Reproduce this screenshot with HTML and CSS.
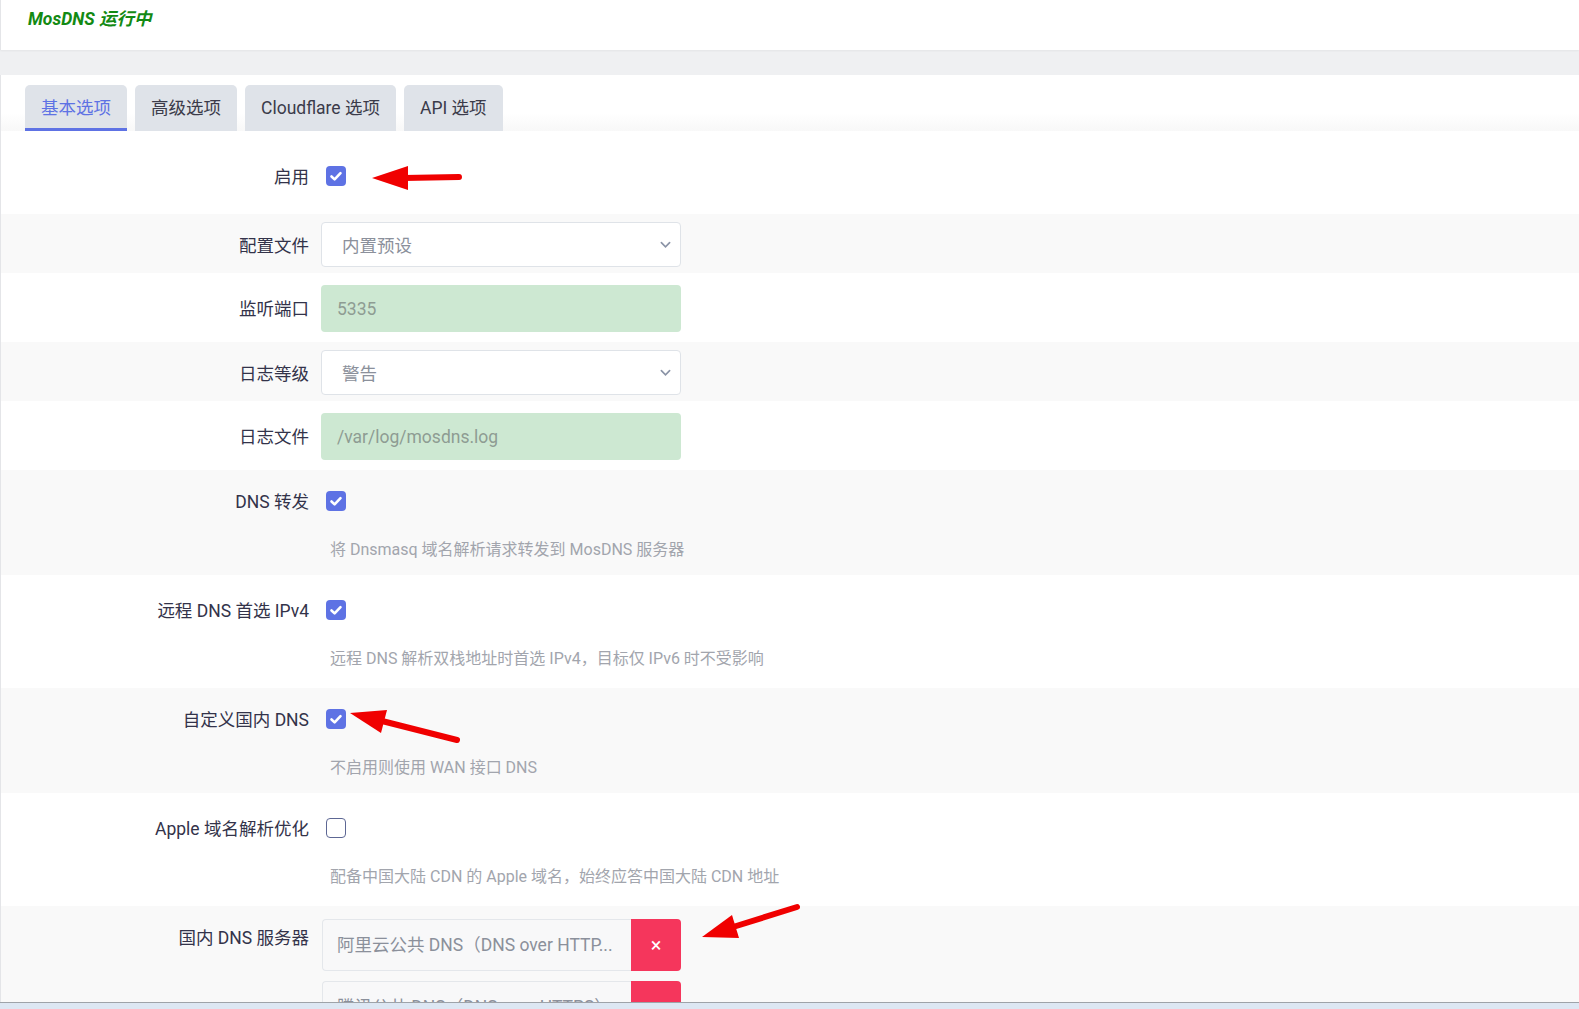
FILE: index.html
```html
<!DOCTYPE html>
<html lang="zh-CN">
<head>
    <meta charset="UTF-8">
    <meta name="viewport" content="width=device-width, initial-scale=1.0">
    <title>MosDNS</title>
    <link rel="stylesheet" href="styles.css">
</head>
<body>
    <div class="status-card">
        <span class="status-text">MosDNS 运行中</span>
    </div>

    <div class="main-card">
        <div class="tabs">
            <button class="tab-button active">基本选项</button>
            <button class="tab-button">高级选项</button>
            <button class="tab-button">Cloudflare 选项</button>
            <button class="tab-button">API 选项</button>
        </div>

        <div class="section">
            <div class="row first">
                <div class="row-label">启用</div>
                <div class="row-field">
                    <div class="check-line"><span class="checkbox checked"><svg viewBox="0 0 20 20"><polyline points="5.5,10.5 8.6,13.4 14.5,7.2"/></svg></span></div>
                </div>
            </div>

            <div class="row">
                <div class="row-label">配置文件</div>
                <div class="row-field">
                    <div class="select">内置预设<svg class="chevron" viewBox="0 0 12 8"><polyline points="1.5,1.5 6,6 10.5,1.5"/></svg></div>
                </div>
            </div>

            <div class="row">
                <div class="row-label">监听端口</div>
                <div class="row-field">
                    <div class="text-input">5335</div>
                </div>
            </div>

            <div class="row">
                <div class="row-label">日志等级</div>
                <div class="row-field">
                    <div class="select">警告<svg class="chevron" viewBox="0 0 12 8"><polyline points="1.5,1.5 6,6 10.5,1.5"/></svg></div>
                </div>
            </div>

            <div class="row">
                <div class="row-label">日志文件</div>
                <div class="row-field">
                    <div class="text-input">/var/log/mosdns.log</div>
                </div>
            </div>

            <div class="row">
                <div class="row-label">DNS 转发</div>
                <div class="row-field">
                    <div class="check-line"><span class="checkbox checked"><svg viewBox="0 0 20 20"><polyline points="5.5,10.5 8.6,13.4 14.5,7.2"/></svg></span></div>
                    <div class="description">将 Dnsmasq 域名解析请求转发到 MosDNS 服务器</div>
                </div>
            </div>

            <div class="row">
                <div class="row-label">远程 DNS 首选 IPv4</div>
                <div class="row-field">
                    <div class="check-line"><span class="checkbox checked"><svg viewBox="0 0 20 20"><polyline points="5.5,10.5 8.6,13.4 14.5,7.2"/></svg></span></div>
                    <div class="description">远程 DNS 解析双栈地址时首选 IPv4，目标仅 IPv6 时不受影响</div>
                </div>
            </div>

            <div class="row">
                <div class="row-label">自定义国内 DNS</div>
                <div class="row-field">
                    <div class="check-line"><span class="checkbox checked"><svg viewBox="0 0 20 20"><polyline points="5.5,10.5 8.6,13.4 14.5,7.2"/></svg></span></div>
                    <div class="description">不启用则使用 WAN 接口 DNS</div>
                </div>
            </div>

            <div class="row">
                <div class="row-label">Apple 域名解析优化</div>
                <div class="row-field">
                    <div class="check-line"><span class="checkbox"></span></div>
                    <div class="description">配备中国大陆 CDN 的 Apple 域名，始终应答中国大陆 CDN 地址</div>
                </div>
            </div>

            <div class="row">
                <div class="row-label">国内 DNS 服务器</div>
                <div class="row-field">
                    <div class="dyn-list">
                        <div class="dyn-item">
                            <div class="dyn-value">阿里云公共 DNS（DNS over HTTP...</div>
                            <button class="dyn-remove">×</button>
                        </div>
                        <div class="dyn-item">
                            <div class="dyn-value">腾讯公共 DNS（DNS over HTTPS）</div>
                            <button class="dyn-remove">×</button>
                        </div>
                    </div>
                </div>
            </div>
        </div>
    </div>

    <!-- red arrows drawn over the screenshot -->
    <svg class="annotations" viewBox="0 0 1579 1009">
        <line x1="404" y1="178" x2="459" y2="177"/>
        <polygon points="372,178 408,166 408,190"/>
        <line x1="382" y1="721" x2="457" y2="740"/>
        <polygon points="350,713 381,733 387,710"/>
        <line x1="733" y1="927" x2="797" y2="907"/>
        <polygon points="702,937 739,938 732,915"/>
    </svg>

    <div class="bottom-strip"></div>
</body>
</html>
```

FILE: styles.css
```css
html, body {
    overflow: hidden;
}
body {
    margin: 0;
    background: #eff0f2;
    font-family: Roboto, "Noto Sans CJK SC", sans-serif;
    font-size: 17.5px;
    color: #33334a;
}
.status-card {
    height: 50px;
    box-sizing: border-box;
    padding: 8px 27px;
    background: #ffffff;
    border-left: 1px solid #e4e5e8;
    box-shadow: 0 1px 2px rgba(0, 0, 0, 0.05);
}
.status-text {
    line-height: 22px;
    font-weight: bold;
    font-style: italic;
    color: #138a13;
}
.main-card {
    margin-top: 25px;
    background: #ffffff;
    border-left: 1px solid #e4e5e8;
}
.tabs {
    display: flex;
    gap: 8px;
    padding: 10px 0 0 24px;
    background: linear-gradient(to bottom, #ffffff 0, #ffffff 38px, #f8f8f8 56px);
}
.tab-button {
    height: 46px;
    padding: 0 16px 3px;
    border: none;
    border-radius: 5px 5px 0 0;
    background: #dfe3e9;
    font-family: inherit;
    font-size: 17.5px;
    color: #3b3b4a;
}
.tab-button.active {
    color: #5e72e4;
    box-shadow: inset 0 -3px 0 #5e72e4;
}
.section {
    padding-top: 10px;
}
.row {
    display: grid;
    grid-template-columns: 308px 1fr;
    column-gap: 12px;
    align-items: start;
    padding: 12px 0 10px;
    background: #ffffff;
}
.row:nth-child(even) {
    padding: 8px 0 6px;
    background: #f9f9f9;
}
.row.first {
    padding-bottom: 16px;
}
.row-label {
    height: 45px;
    display: flex;
    align-items: center;
    justify-content: flex-end;
    white-space: nowrap;
}
.check-line {
    height: 45px;
    display: flex;
    align-items: center;
}
.checkbox {
    width: 20px;
    height: 20px;
    margin-left: 5px;
    box-sizing: border-box;
    border: 1.5px solid #5d6794;
    border-radius: 4px;
    background: #ffffff;
}
.checkbox.checked {
    border: none;
    background: #5e72e4;
}
.checkbox svg {
    display: block;
    width: 20px;
    height: 20px;
    fill: none;
    stroke: #ffffff;
    stroke-width: 2.6;
    stroke-linecap: round;
    stroke-linejoin: round;
}
.description {
    margin: 17px 0 9px;
    padding-left: 9px;
    line-height: 20px;
    font-size: 16px;
    color: #a2a5ad;
}
.select {
    width: 360px;
    height: 45px;
    box-sizing: border-box;
    display: flex;
    align-items: center;
    justify-content: space-between;
    padding: 0 9px 0 20px;
    border: 1px solid #dfe3e8;
    border-radius: 4px;
    background: #ffffff;
    color: #8b909b;
}
.chevron {
    width: 11px;
    height: 8px;
    fill: none;
    stroke: #8a93a6;
    stroke-width: 1.8;
    stroke-linecap: round;
}
.text-input {
    width: 360px;
    height: 47px;
    box-sizing: border-box;
    display: flex;
    align-items: center;
    padding-left: 16px;
    border-radius: 4px;
    background: #cde8d2;
    color: #8e9c93;
}
.dyn-list {
    display: flex;
    flex-direction: column;
    gap: 10px;
    margin-top: 5px;
    padding-left: 1px;
}
.dyn-item {
    display: flex;
    width: 359px;
    height: 52px;
}
.dyn-value {
    flex: 1;
    display: flex;
    align-items: center;
    padding: 0 0 3px 14px;
    border: 1px solid #e4e7eb;
    border-right: none;
    border-radius: 4px 0 0 4px;
    background: #f8f8f9;
    color: #8b909b;
    white-space: nowrap;
    overflow: hidden;
}
.dyn-remove {
    width: 50px;
    border: none;
    border-radius: 0 4px 4px 0;
    background: #f5365c;
    color: #ffffff;
    font-family: inherit;
    font-size: 20px;
}
.annotations {
    position: absolute;
    top: 0;
    left: 0;
    width: 1579px;
    height: 1009px;
    pointer-events: none;
}
.annotations line {
    stroke: #f00000;
    stroke-width: 6;
    stroke-linecap: round;
}
.annotations polygon {
    fill: #f00000;
}
.bottom-strip {
    position: fixed;
    left: 0;
    right: 0;
    bottom: 0;
    height: 6px;
    border-top: 1px solid #9ea3a9;
    background: #dde7f3;
}
```
